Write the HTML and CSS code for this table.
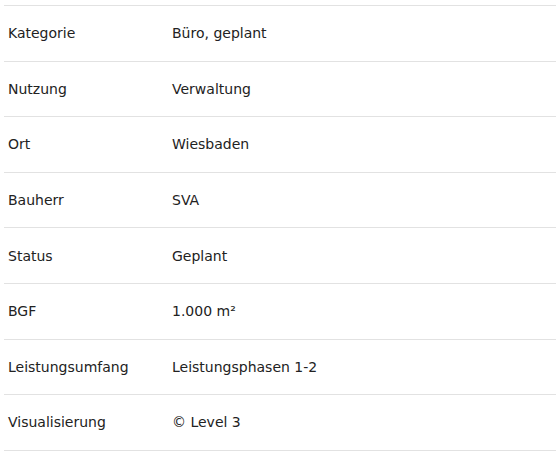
FILE: index.html
```html
<!DOCTYPE html>
<html lang="de">
<head>
<meta charset="utf-8">
<title>Projektdaten</title>
<link rel="stylesheet" href="styles.css">
</head>
<body>
<div class="facts">
  <div class="row"><div class="label">Kategorie</div><div class="value">Büro, geplant</div></div>
  <div class="row"><div class="label">Nutzung</div><div class="value">Verwaltung</div></div>
  <div class="row"><div class="label">Ort</div><div class="value">Wiesbaden</div></div>
  <div class="row"><div class="label">Bauherr</div><div class="value">SVA</div></div>
  <div class="row"><div class="label">Status</div><div class="value">Geplant</div></div>
  <div class="row"><div class="label">BGF</div><div class="value">1.000 m²</div></div>
  <div class="row"><div class="label">Leistungsumfang</div><div class="value">Leistungsphasen 1-2</div></div>
  <div class="row"><div class="label">Visualisierung</div><div class="value">© Level 3</div></div>
</div>
</body>
</html>
```
FILE: styles.css
```css
html, body {
  margin: 0;
  padding: 0;
  background: #ffffff;
}
body {
  font-family: "DejaVu Sans", Verdana, sans-serif;
  font-size: 14px;
  color: #222222;
}
.facts {
  margin: 5px 4px 0;
  border-top: 1px solid #e2e2e2;
}
.row {
  display: grid;
  grid-template-columns: 164px 1fr;
  border-bottom: 1px solid #e2e2e2;
}
.label, .value {
  padding: 17.3px 4px;
  line-height: 20px;
}
```
